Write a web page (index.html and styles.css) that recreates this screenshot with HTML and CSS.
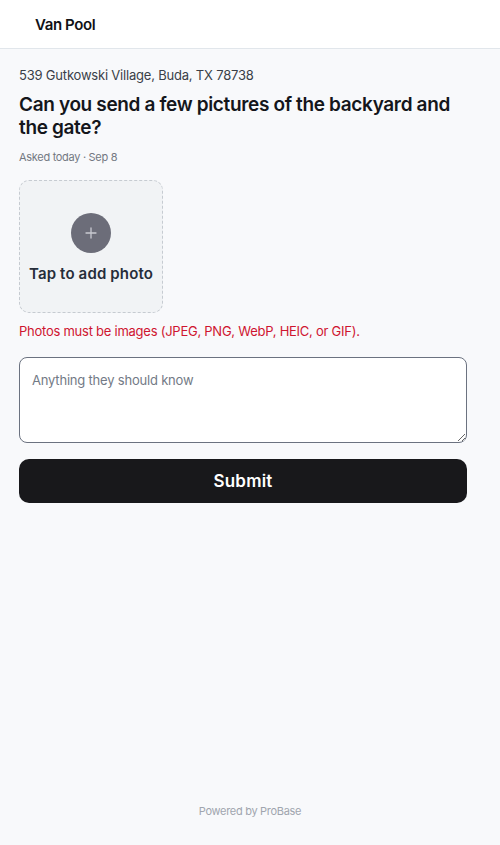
FILE: index.html
```html
<!DOCTYPE html>
<html lang="en">
<head>
<meta charset="utf-8">
<title>Van Pool</title>
<link rel="stylesheet" href="styles.css">
</head>
<body>
<div class="page">
  <header class="topbar">
    <span class="brand">Van Pool</span>
  </header>
  <main class="content">
    <p class="address">539 Gutkowski Village, Buda, TX 78738</p>
    <h1 class="question">Can you send a few pictures of the backyard and the gate?</h1>
    <p class="meta">Asked today · Sep 8</p>
    <button class="upload" type="button">
      <span class="upload-icon">
        <svg width="12" height="12" viewBox="0 0 12 12"><path d="M6 1v10M1 6h10" stroke="#c9cad1" stroke-width="1.3" stroke-linecap="round"/></svg>
      </span>
      <span class="upload-label">Tap to add photo</span>
    </button>
    <p class="error">Photos must be images (JPEG, PNG, WebP, HEIC, or GIF).</p>
    <textarea class="notes" placeholder="Anything they should know"></textarea>
    <button class="submit" type="button">Submit</button>
  </main>
  <footer class="footer">Powered by ProBase</footer>
</div>
</body>
</html>
```
FILE: styles.css
```css
* { box-sizing: border-box; }
html { overflow-y: scroll; }
html, body { margin: 0; padding: 0; }
body {
  font-family: Inter, "Noto Sans", sans-serif;
  background: #f8f9fb;
  color: #15171c;
}
.page {
  min-height: 850px;
  display: flex;
  flex-direction: column;
}
.topbar {
  height: 49px;
  background: #ffffff;
  border-bottom: 1px solid #e1e6eb;
  display: flex;
  align-items: center;
  padding: 0 35px;
}
.brand {
  font-size: 15px;
  font-weight: 600;
  letter-spacing: -0.4px;
  color: #111216;
}
.content {
  flex: 1;
  padding: 18px 18px 0 19px;
  display: flex;
  flex-direction: column;
  align-items: flex-start;
}
.address {
  margin: 0;
  font-size: 13px;
  letter-spacing: -0.2px;
  color: #3a3f48;
  line-height: 17px;
}
.question {
  margin: 9px 0 0;
  font-size: 19px;
  font-weight: 600;
  letter-spacing: -0.35px;
  line-height: 23px;
  color: #14161b;
  max-width: 448px;
}
.meta {
  margin: 11px 0 0;
  font-size: 11px;
  letter-spacing: -0.3px;
  color: #737882;
  line-height: 14px;
}
.upload {
  margin-top: 16px;
  width: 144px;
  height: 133px;
  border: 1px dashed #c6cbd1;
  border-radius: 10px;
  background: #f1f3f5;
  display: flex;
  flex-direction: column;
  align-items: center;
  justify-content: center;
  gap: 11px;
  padding: 2px 0 0;
  font-family: inherit;
  cursor: pointer;
}
.upload-icon {
  width: 40px;
  height: 40px;
  border-radius: 50%;
  background: #6c6d79;
  display: flex;
  align-items: center;
  justify-content: center;
}
.upload-label {
  font-size: 15px;
  font-weight: 600;
  color: #262d3a;
  letter-spacing: 0.15px;
}
.error {
  margin: 10px 0 0;
  font-size: 13px;
  color: #cf1530;
  letter-spacing: -0.25px;
  line-height: 17px;
}
.notes {
  margin-top: 17px;
  width: 448px;
  height: 86px;
  border: 1px solid #6b7280;
  border-radius: 8px;
  background: #ffffff;
  padding: 14px 12px;
  font-family: inherit;
  font-size: 13px;
  letter-spacing: -0.2px;
  color: #1f2937;
  resize: vertical;
}
.notes::placeholder { color: #737a86; }
.submit {
  margin-top: 16px;
  width: 448px;
  height: 44px;
  border: none;
  border-radius: 10px;
  background: #18181b;
  color: #ffffff;
  font-family: inherit;
  font-size: 17px;
  font-weight: 600;
  letter-spacing: 0.2px;
  cursor: pointer;
}
.footer {
  text-align: center;
  font-size: 11px;
  color: #a0a5ae;
  letter-spacing: -0.3px;
  padding: 0 0 32px;
}
```
